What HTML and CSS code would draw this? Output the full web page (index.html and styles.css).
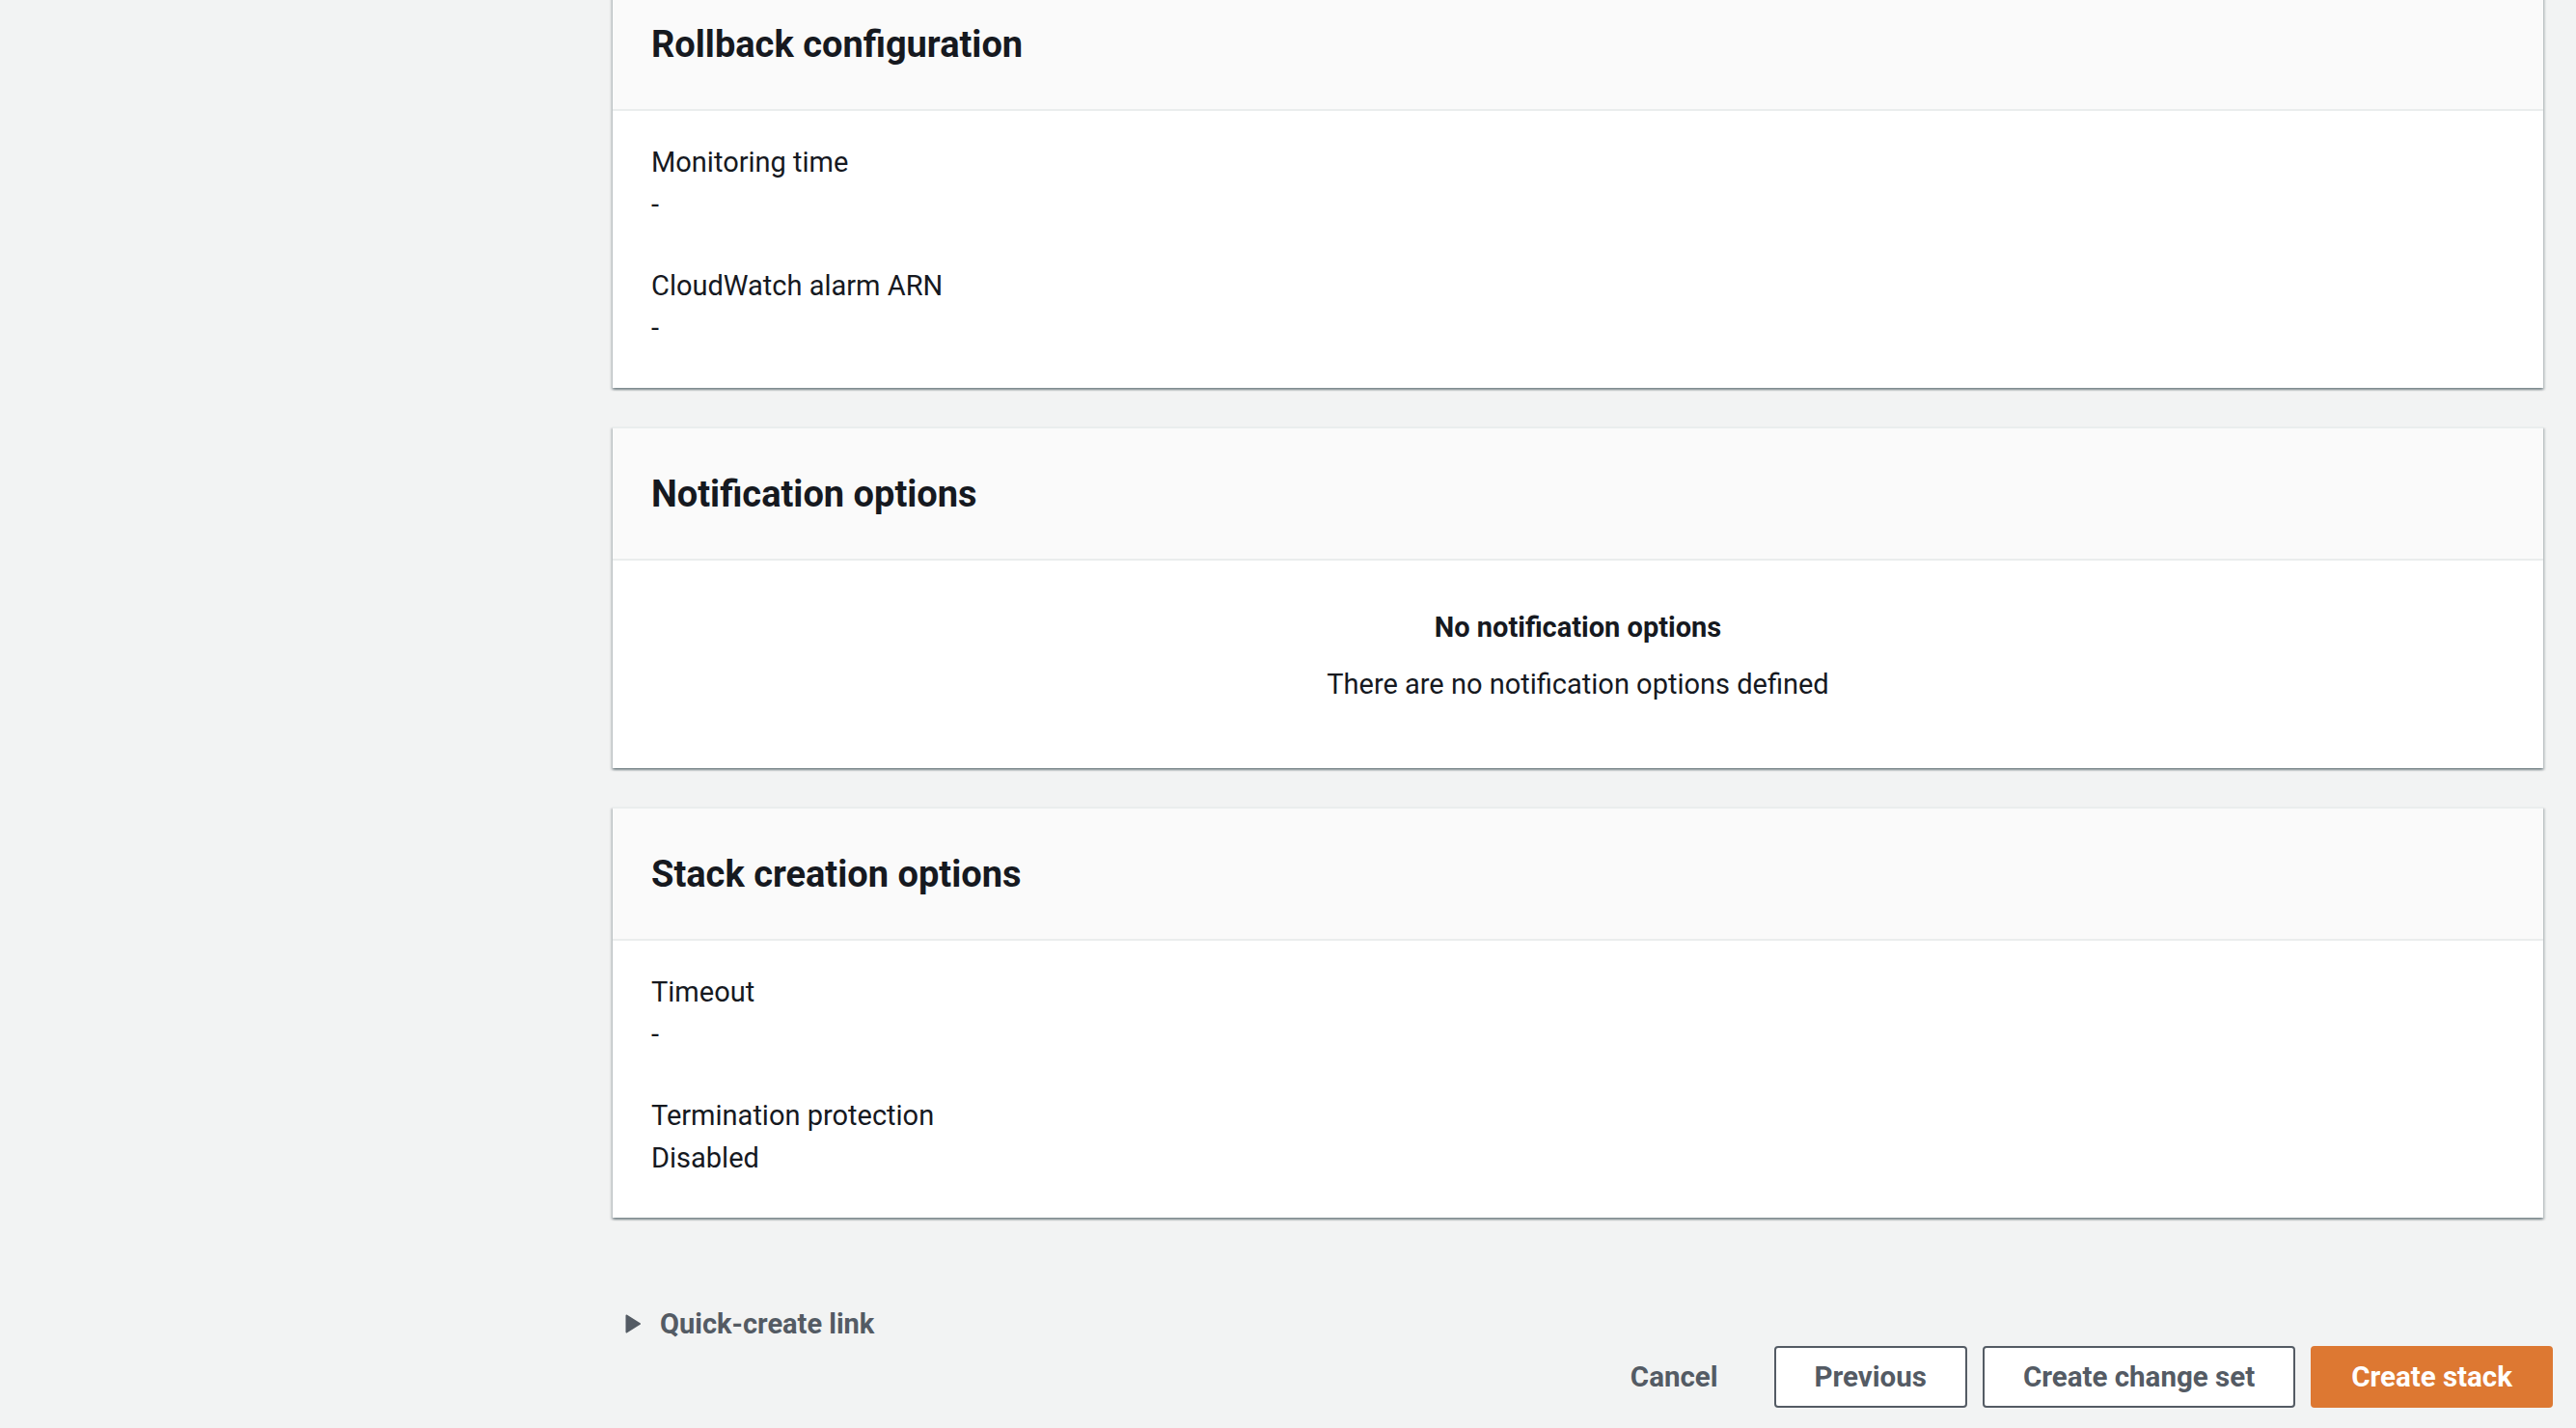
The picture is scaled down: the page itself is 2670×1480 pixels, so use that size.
FILE: index.html
```html
<!DOCTYPE html>
<html lang="en">
<head>
<meta charset="utf-8">
<title>Review stack</title>
<link rel="stylesheet" href="styles.css">
</head>
<body>
<main class="page">
  <section class="card">
    <header class="card-header"><h2>Rollback configuration</h2></header>
    <div class="card-body">
      <div class="kv">
        <div class="kv-label">Monitoring time</div>
        <div class="kv-value">-</div>
      </div>
      <div class="kv">
        <div class="kv-label">CloudWatch alarm ARN</div>
        <div class="kv-value">-</div>
      </div>
    </div>
  </section>

  <section class="card">
    <header class="card-header"><h2>Notification options</h2></header>
    <div class="card-body empty">
      <div class="empty-title">No notification options</div>
      <div class="empty-text">There are no notification options defined</div>
    </div>
  </section>

  <section class="card">
    <header class="card-header"><h2>Stack creation options</h2></header>
    <div class="card-body">
      <div class="kv">
        <div class="kv-label">Timeout</div>
        <div class="kv-value">-</div>
      </div>
      <div class="kv">
        <div class="kv-label">Termination protection</div>
        <div class="kv-value">Disabled</div>
      </div>
    </div>
  </section>

  <div class="expander">
    <svg class="caret" viewBox="0 0 16 20" width="16" height="20" aria-hidden="true"><path d="M1.5 1.5 L15 10 L1.5 18.5 Z" fill="#545b64" stroke="#545b64" stroke-width="2" stroke-linejoin="round"/></svg>
    <span>Quick-create link</span>
  </div>

  <div class="actions">
    <button class="btn btn-link">Cancel</button>
    <button class="btn">Previous</button>
    <button class="btn">Create change set</button>
    <button class="btn btn-primary">Create stack</button>
  </div>
</main>
</body>
</html>
```
FILE: styles.css
```css
html, body {
  margin: 0;
  padding: 0;
  background: #f2f3f3;
}
body {
  font-family: Roboto, "Liberation Sans", Arial, sans-serif;
  font-size: 29px;
  line-height: 44px;
  color: #16191f;
  overflow: hidden;
  height: 1480px;
}
.page {
  margin-top: -24px;
  margin-left: 635px;
  width: 2001px;
  display: flex;
  flex-direction: column;
}
.card {
  background: #fff;
  border-top: 2px solid #eaeded;
  box-shadow: 0 2px 2px 0 rgba(0, 28, 36, 0.3), 2px 2px 2px 0 rgba(0, 28, 36, 0.15), -2px 2px 2px 0 rgba(0, 28, 36, 0.15);
  margin-bottom: 40px;
}
.card-header {
  background: #fafafa;
  padding: 46px 40px 45px;
  border-bottom: 2px solid #eaeded;
}
.card-header h2 {
  margin: 0;
  font-size: 38px;
  line-height: 44px;
  font-weight: 700;
  color: #16191f;
}
.card-body {
  padding: 31px 40px 40px;
  display: flex;
  flex-direction: column;
  gap: 40px;
}
.kv-label, .kv-value {
  line-height: 44px;
}
.card-body.empty {
  align-items: center;
  gap: 15px;
  padding: 47px 40px 65px;
}
.empty-title {
  font-weight: 700;
}
.expander {
  margin-top: 48px;
  display: flex;
  align-items: center;
  gap: 20px;
  padding-left: 13px;
  color: #545b64;
  font-weight: 700;
  height: 44px;
}
.caret {
  display: block;
}
.actions {
  display: flex;
  justify-content: flex-end;
  gap: 16px;
  margin-top: 1px;
  margin-right: -10px;
}
.btn {
  font-family: inherit;
  font-size: 29.5px;
  font-weight: 700;
  line-height: 44px;
  color: #545b64;
  background: #fff;
  border: 2px solid #545b64;
  border-radius: 4px;
  padding: 8px 40px;
  cursor: pointer;
}
.btn-link {
  background: transparent;
  border-color: transparent;
}
.btn-primary {
  background: #dd7832;
  border-color: #dd7832;
  color: #fff;
}
```
